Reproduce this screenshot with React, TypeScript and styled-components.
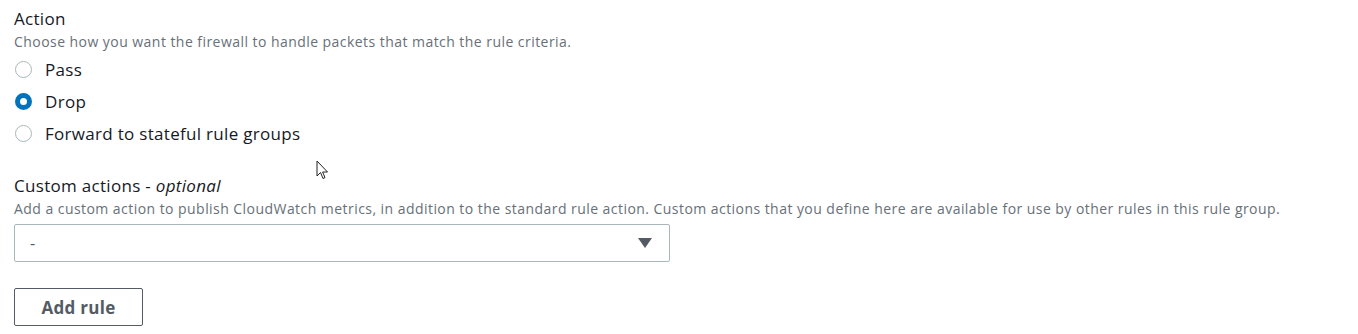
import React from "react";
import styled, { createGlobalStyle } from "styled-components";

const Global = createGlobalStyle`
  html, body { margin: 0; padding: 0; background: #ffffff; }
  body { font-family: "Open Sans", "Noto Sans", sans-serif; color: #16191f; }
  * { box-sizing: border-box; }
`;

const Page = styled.div`
  padding: 7px 14px 0 14px;
  display: flex;
  flex-direction: column;
`;

const Field = styled.div<{ $gap?: number }>`
  display: flex;
  flex-direction: column;
  margin-bottom: ${(p) => p.$gap ?? 0}px;
`;

const Label = styled.div`
  font-size: 17px;
  letter-spacing: 0.3px;
  line-height: 24px;
  color: #16191f;
  em { font-style: italic; }
`;

const Description = styled.div`
  font-size: 14px;
  letter-spacing: 0.45px;
  line-height: 18px;
  color: #687078;
  margin-top: 2px;
`;

const RadioList = styled.div`
  display: flex;
  flex-direction: column;
  margin-top: 2px;
`;

const RadioRow = styled.label`
  display: flex;
  align-items: center;
  height: 32px;
  gap: 13px;
  font-size: 17px;
  letter-spacing: 0.3px;
  color: #16191f;
`;

const RadioDot = styled.span<{ $checked?: boolean }>`
  width: 17px;
  height: 17px;
  margin-left: 1px;
  border-radius: 50%;
  border: ${(p) => (p.$checked ? "5px solid #0073bb" : "1.5px solid #aab7b8")};
  background: #ffffff;
  flex: none;
`;

const Select = styled.div`
  margin-top: 6px;
  width: 656px;
  height: 38px;
  border: 1px solid #aab7b8;
  border-radius: 2px;
  display: flex;
  align-items: center;
  justify-content: space-between;
  padding: 0 17px 0 15px;
  font-size: 16px;
  color: #545b64;
`;

const Caret = styled.span`
  width: 0;
  height: 0;
  border-left: 7px solid transparent;
  border-right: 7px solid transparent;
  border-top: 10px solid #545b64;
`;

const Button = styled.button`
  align-self: flex-start;
  margin-top: 26px;
  width: 129px;
  height: 38px;
  border: 1px solid #545b64;
  border-radius: 2px;
  background: #ffffff;
  font-family: "Open Sans", "Noto Sans", sans-serif;
  font-weight: 700;
  font-size: 17px;
  letter-spacing: 0.3px;
  color: #545b64;
  padding: 0;
`;

const Cursor = styled.svg`
  position: absolute;
  left: 316px;
  top: 160px;
`;

export default function App() {
  return (
    <>
      <Global />
      <Page>
        <Field $gap={25}>
          <Label>Action</Label>
          <Description>Choose how you want the firewall to handle packets that match the rule criteria.</Description>
          <RadioList>
            <RadioRow><RadioDot />Pass</RadioRow>
            <RadioRow><RadioDot $checked />Drop</RadioRow>
            <RadioRow><RadioDot />Forward to stateful rule groups</RadioRow>
          </RadioList>
        </Field>
        <Field>
          <Label>Custom actions - <em>optional</em></Label>
          <Description>
            Add a custom action to publish CloudWatch metrics, in addition to the standard rule action. Custom actions that you define here are available for use by other rules in this rule group.
          </Description>
          <Select>
            <span>-</span>
            <Caret />
          </Select>
        </Field>
        <Button>Add rule</Button>
      </Page>
      <Cursor width="14" height="21" viewBox="0 0 14 21">
        <path d="M1 1 L1 16 L4.5 12.5 L7 18.5 L9 17.6 L6.6 12 L11.5 12 Z" fill="#ffffff" stroke="#222" strokeWidth="1" strokeLinejoin="round" />
      </Cursor>
    </>
  );
}
